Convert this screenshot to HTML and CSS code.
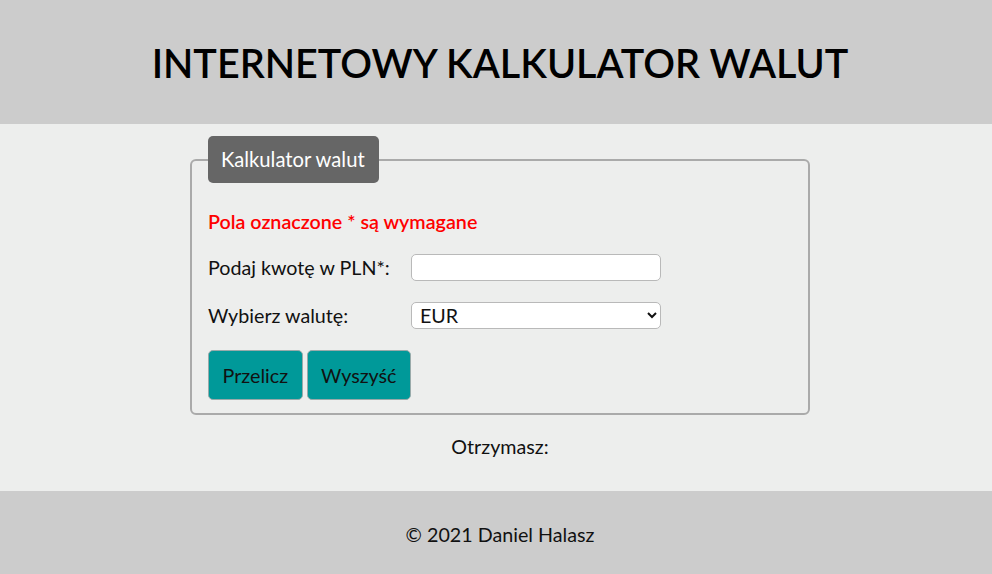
FILE: index.html
```html
<!DOCTYPE html>
<html lang="pl">
<head>
<meta charset="utf-8">
<title>Internetowy kalkulator walut</title>
<link rel="stylesheet" href="styles.css">
</head>
<body>
<div class="page">
  <header class="header">
    <h1 class="title">INTERNETOWY KALKULATOR WALUT</h1>
  </header>
  <main class="main">
    <form class="form">
      <fieldset class="fieldset">
        <legend class="legend">Kalkulator walut</legend>
        <p class="required">Pola oznaczone * są wymagane</p>
        <div class="row">
          <label class="label" for="amount">Podaj kwotę w PLN*:</label>
          <input class="field" id="amount" type="number">
        </div>
        <div class="row">
          <label class="label" for="currency">Wybierz walutę:</label>
          <select class="field select" id="currency">
            <option>EUR</option>
            <option>USD</option>
            <option>GBP</option>
          </select>
        </div>
        <div class="buttons">
          <button class="button" type="submit">Przelicz</button>
          <button class="button" type="reset">Wyszyść</button>
        </div>
      </fieldset>
    </form>
    <p class="result">Otrzymasz:</p>
  </main>
  <footer class="footer">
    <p class="footer-text">© 2021 Daniel Halasz</p>
  </footer>
</div>
</body>
</html>
```

FILE: styles.css
```css
html, body {
  margin: 0;
  padding: 0;
  overflow: hidden;
}
body {
  font-family: Lato, "Open Sans", sans-serif;
  font-size: 19.7px;
  color: #111;
  background: #edeeed;
}
.page {
  width: 1000px;
}
.header {
  background: #cccccc;
  height: 124px;
  display: flex;
  align-items: center;
  justify-content: center;
}
.title {
  margin: 0;
  font-weight: 600;
  font-size: 39.5px;
  color: #000;
}
.main {
  background: #edeeed;
  padding: 12px 0 0;
  height: 355px;
}
.form {
  width: 620px;
  margin: 0 auto;
}
.fieldset {
  margin: 0;
  border: 2px solid #aaaaaa;
  border-radius: 6px;
  padding: 0 16px 13px 16px;
}
.legend {
  background: #666666;
  color: #fff;
  border-radius: 5px;
  padding: 12px 14px 13px 13px;
  font-size: 20.2px;
  line-height: 22px;
}
.required {
  margin: 28px 0 21px;
  color: #ff0000;
  font-weight: 600;
  line-height: 22px;
}
.row {
  display: grid;
  grid-template-columns: 203px 250px;
  align-items: center;
  margin-bottom: 21px;
}
.label {
  line-height: 22px;
}
.field {
  box-sizing: border-box;
  width: 250px;
  height: 27px;
  border: 1px solid #b9b9b9;
  border-radius: 5px;
  background: #fff;
  font-family: Lato, sans-serif;
  font-size: 19.7px;
  padding: 0 6px;
  margin: 0;
  color: #111;
}
.select {
  padding: 0 4px;
}
.buttons {
  display: flex;
  gap: 4px;
}
.button {
  font-family: Lato, sans-serif;
  font-size: 19.7px;
  color: #111;
  background: #009999;
  border: 1px solid #9aa;
  border-radius: 5px;
  height: 50px;
  padding: 0 13.5px;
  margin: 0;
}
.result {
  text-align: center;
  margin: 21px 0 0;
  line-height: 22px;
}
.footer {
  background: #cccccc;
  height: 83px;
  box-sizing: border-box;
  padding-top: 4px;
  display: flex;
  align-items: center;
  justify-content: center;
}
.footer-text {
  margin: 0;
  line-height: 22px;
}
```
